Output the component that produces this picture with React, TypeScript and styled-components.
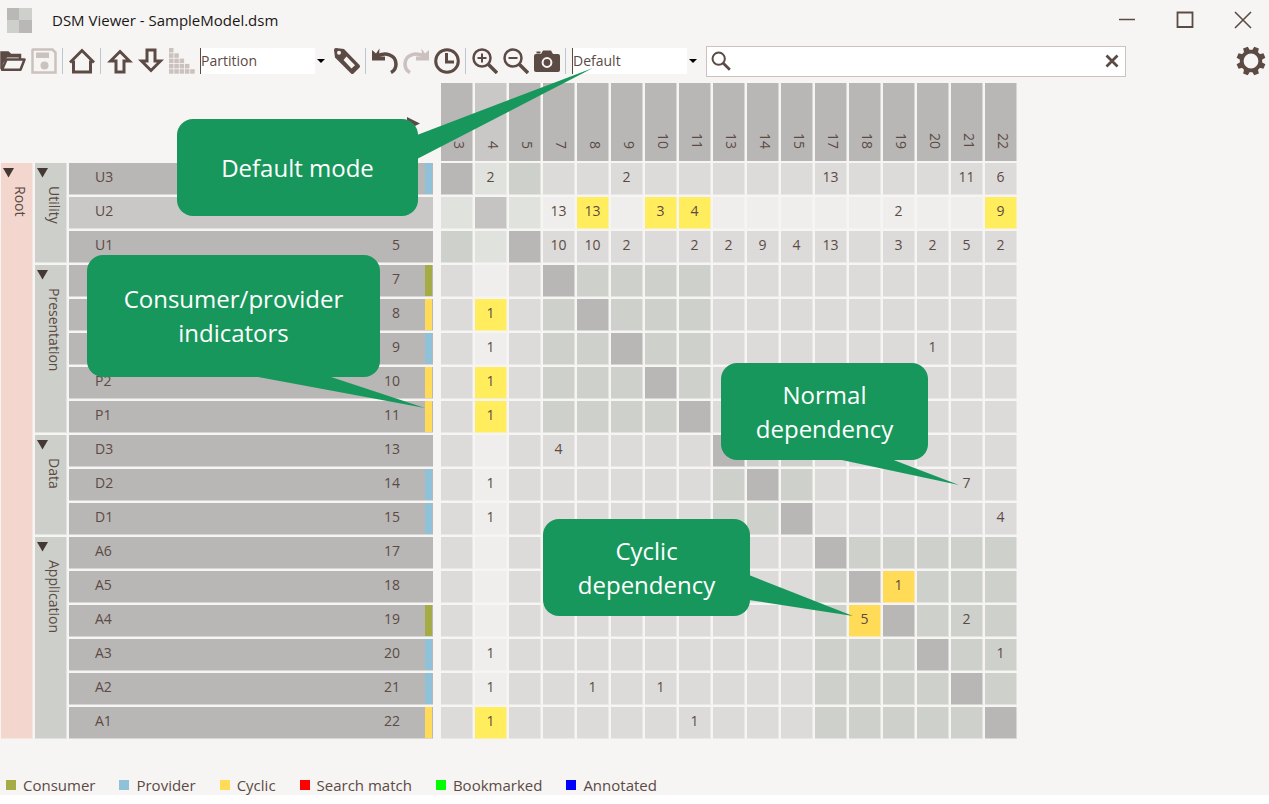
import React from "react";
import styled, { createGlobalStyle } from "styled-components";

const ink = "#5c4a45";
const page = "#f6f5f3";
const green = "#18975c";

const GlobalStyle = createGlobalStyle`
  *, *::before, *::after { box-sizing: border-box; }
  body { margin: 0; background: #fff; }
  body, button, input, select { font-family: "Open Sans", "Noto Sans", sans-serif; }
`;

const Window = styled.div`
  position: relative;
  background: ${page};
  color: ${ink};
  font-size: 14px;
  overflow: hidden;
`;

const TitleBar = styled.header`
  display: flex;
  align-items: center;
  height: 40px;
  padding: 0 5px 0 6px;
`;

const Title = styled.h1`
  margin: 0 auto 0 20px;
  font-size: 15px;
  line-height: 24px;
  font-weight: 400;
  color: #1a1716;
  white-space: nowrap;
`;

const WindowButtons = styled.div`
  display: flex;
  gap: 16px;
`;

const IconButton = styled.button<{ $size?: number }>`
  display: flex;
  align-items: center;
  justify-content: center;
  flex: none;
  width: ${(p) => p.$size ?? 26}px;
  height: ${(p) => p.$size ?? 26}px;
  padding: 0;
  border: 0;
  background: none;
  color: ${ink};
  &:disabled { color: #cbc1be; }
`;

const Toolbar = styled.div`
  display: flex;
  align-items: center;
  gap: 5px;
  height: 42px;
  padding-right: 3px;
`;

const Separator = styled.span`
  flex: none;
  width: 2px;
  height: 26px;
  border-left: 1px solid #bcc6d0;
`;

const SelectBox = styled.label`
  position: relative;
  flex: none;
  width: 129px;
  height: 26px;
  svg { position: absolute; right: 4px; top: 11px; pointer-events: none; }
`;

const Select = styled.select`
  appearance: none;
  width: 100%;
  height: 26px;
  padding: 0 0 2px;
  border: 0;
  border-left: 1px solid ${ink};
  border-radius: 0;
  background: linear-gradient(#fff, #fff) 0 0 / 114px 100% no-repeat;
  color: ${ink};
  font-size: 14px;
`;

const SearchBox = styled.label`
  display: flex;
  align-items: center;
  flex: 0 1 420px;
  height: 31px;
  padding: 0 0 0 4px;
  border: 1px solid #cdc0be;
  background: #fff;
`;

const SearchInput = styled.input`
  flex: 1;
  min-width: 0;
  border: 0;
  outline: 0;
  background: none;
  font-size: 14px;
`;

const Settings = styled.div`
  margin-left: auto;
`;

const Matrix = styled.table`
  table-layout: fixed;
  width: 1020px;
  margin: -1px 0 0 -1px;
  border-collapse: separate;
  border-spacing: 2px;
  th, td { padding: 0; font-weight: 400; line-height: 20px; }
`;

const CornerInner = styled.div`
  display: flex;
  justify-content: flex-end;
  align-items: flex-end;
  height: 78px;
  padding: 0 13px 31px 0;
`;

const ColumnHead = styled.th<{ $lit: boolean }>`
  height: 78px;
  border-right: 1px solid #f6f5f380;
  background: ${(p) => (p.$lit ? "#c9c8c7" : "#b8b7b5")};
`;

const ColumnLabel = styled.div`
  display: flex;
  justify-content: flex-end;
  align-items: center;
  height: 78px;
  padding: 0 2px 12px 8px;
  writing-mode: vertical-rl;
`;

const Branch = styled.th<{ $tone: string }>`
  vertical-align: top;
  border-right: 1px solid #f6f5f380;
  border-bottom: 1px solid #f6f5f380;
  background: ${(p) => p.$tone};
`;

const BranchInner = styled.div`
  display: flex;
  flex-direction: column;
  gap: 8px;
  padding: 5px 2px 0;
  span { writing-mode: vertical-rl; margin-left: 5px; }
`;

const ItemHead = styled.th<{ $lit: boolean }>`
  border-bottom: 1px solid #f6f5f380;
  background: ${(p) => (p.$lit ? "#c9c8c7" : "#b8b7b5")};
`;

const ItemInner = styled.div`
  display: flex;
  align-items: center;
  height: 31px;
  padding: 0 1px 0 26px;
`;

const ItemName = styled.span`
  padding-bottom: 3px;
`;

const ItemId = styled.span`
  margin: 0 25px 0 auto;
  padding-bottom: 3px;
`;

const Indicator = styled.i<{ $tone: string }>`
  width: 7px;
  height: 31px;
  background: ${(p) => p.$tone};
`;

const Cell = styled.td<{ $tone: string }>`
  height: 32px;
  border-right: 1px solid #f6f5f380;
  border-bottom: 1px solid #f6f5f380;
  text-align: center;
  background: ${(p) => p.$tone};
  && { padding-bottom: 3px; }
`;

const Legend = styled.footer`
  display: flex;
  align-items: center;
  gap: 24px;
  height: 20px;
  margin-top: 34px;
  padding-left: 6px;
  font-size: 15px;
  line-height: 20px;
`;

const LegendItem = styled.span`
  display: flex;
  align-items: center;
  gap: 7px;
  white-space: nowrap;
`;

const Swatch = styled.i<{ $tone: string }>`
  width: 10px;
  height: 10px;
  background: ${(p) => p.$tone};
`;

const Note = styled.aside<{ $x: number; $y: number; $w: number; $h: number }>`
  position: absolute;
  left: ${(p) => p.$x}px;
  top: ${(p) => p.$y}px;
  width: ${(p) => p.$w}px;
  height: ${(p) => p.$h}px;
  display: flex;
  align-items: center;
  justify-content: center;
  border-radius: 16px;
  background: ${green};
  color: #fff;
  font-size: 24px;
  line-height: 34px;
  text-align: center;
  white-space: pre-line;
  svg { position: absolute; left: 0; top: 0; overflow: visible; pointer-events: none; }
`;

const Icon = ({ children, size = 26, box = 26 }: { children: React.ReactNode; size?: number; box?: number }) => (
  <svg width={size} height={size} viewBox={`0 0 ${box} ${box}`} fill="none" stroke="currentColor" strokeWidth={3} aria-hidden="true">
    {children}
  </svg>
);

const icons = {
  open: (
    <Icon>
      <path d="M1.5 21V4.500H8L10.500 7H20V11" strokeWidth={2.500} />
      <path d="M1.500 4.500H8l2.500 3H20v2H7L1.500 18Z" fill="currentColor" stroke="none" />
      <path d="M2 21.800 6.500 11.500H24.500L20.500 21.800Z" strokeWidth={2.500} strokeLinejoin="round" />
    </Icon>
  ),
  save: (
    <Icon>
      <path d="M2 1.500H21.500L24.500 4.500V24.500H1.500V2Z" strokeWidth={2.500} />
      <path d="M5 4.500H18V10H5Z" fill="currentColor" stroke="none" />
      <circle cx="13.500" cy="17.500" r="4" fill="currentColor" stroke="none" />
    </Icon>
  ),
  home: (
    <Icon>
      <path d="M1 14.500 13 2.500 25 14.500" />
      <path d="M4.500 12.500V24H21.500V12.500" />
    </Icon>
  ),
  up: (
    <Icon>
      <path d="M13 3.500 22.500 13H17V24H9V13H3.500Z" />
    </Icon>
  ),
  down: (
    <Icon>
      <path d="M13 22.500 3.500 13H9V2H17V13H22.500Z" />
    </Icon>
  ),
  sort: (
    <Icon>
      <g fill="currentColor" stroke="none">
        {[0, 1, 2, 3, 4].map((row) =>
          Array.from({ length: row + 1 }, (_, c) => (
            <rect key={`${row}-${c}`} x={c * 5.300} y={row * 5.300} width="4.500" height="4.500" />
          ))
        )}
      </g>
    </Icon>
  ),
  tag: (
    <Icon>
      <path
        d="M0 2Q0 0 2 0L10 1 25.500 17Q26.500 18.500 25.500 19.500L19.500 25.500Q18.500 26.500 17 25.500L1 9.500ZM5 2.800A2 2 0 1 0 5 6.800A2 2 0 1 0 5 2.800M12.500 8.500 9.500 12 17.500 20.500 21 17.200Z"
        fill="currentColor"
        fillRule="evenodd"
        stroke="none"
      />
    </Icon>
  ),
  undo: (
    <Icon>
      <path d="M4 9C13 3 24 7 24 16C24 20 22 23 19 24.500" strokeWidth={3.500} />
      <path d="M0 2 4 5.500 7.500.5 7 8.500H13V12.500H0Z" fill="currentColor" stroke="none" />
    </Icon>
  ),
  redo: (
    <Icon>
      <path d="M22 9C13 3 2 7 2 16C2 20 4 23 7 24.500" strokeWidth={3.500} />
      <path d="M26 2 22 5.500 18.500.5 19 8.500H13V12.500H26Z" fill="currentColor" stroke="none" />
    </Icon>
  ),
  clock: (
    <Icon>
      <circle cx="13" cy="13" r="11.300" />
      <path d="M12.500 5V14H20" />
    </Icon>
  ),
  zoomIn: (
    <Icon>
      <circle cx="10" cy="10" r="8.500" strokeWidth={2.500} />
      <path d="M16 16 25 25" strokeWidth={3.500} />
      <path d="M5.500 10H14.500M10 5.500V14.500" strokeWidth={2} />
    </Icon>
  ),
  zoomOut: (
    <Icon>
      <circle cx="10" cy="10" r="8.500" strokeWidth={2.500} />
      <path d="M16 16 25 25" strokeWidth={3.500} />
      <path d="M5.500 10H14.500" strokeWidth={2} />
    </Icon>
  ),
  camera: (
    <Icon>
      <path
        d="M2 6H7L9 2.500H17L19 6H24Q26 6 26 8V22Q26 24 24 24H2Q0 24 0 22V8Q0 6 2 6Z"
        fill="currentColor"
        stroke="none"
      />
      <circle cx="13" cy="14.500" r="4.400" stroke={page} strokeWidth={2} />
      <path d="M2.500 4.500H6.500" strokeWidth={2} />
    </Icon>
  ),
  search: (
    <Icon size={20}>
      <circle cx="10" cy="10" r="8" strokeWidth={2.600} />
      <path d="M16 16 24.500 24.500" strokeWidth={3.600} />
    </Icon>
  ),
  gear: (
    <Icon size={30} box={30}>
      <circle cx="15" cy="15" r="9.300" strokeWidth={3.800} />
      {[0, 1, 2, 3, 4, 5, 6, 7].map((n) => (
        <path key={n} d="M11.800 5.500 12.500.5H17.500L18.200 5.500Z" fill="currentColor" stroke="none" transform={`rotate(${n * 45 + 22.500} 15 15)`} />
      ))}
    </Icon>
  ),
};

const DropArrow = () => (
  <svg width="8" height="4" viewBox="0 0 8 4" aria-hidden="true">
    <path d="M0 0H8L4 4Z" fill="#000" />
  </svg>
);

const tones: Record<string, string> = { consumer: "#a5ab45", provider: "#8fc1d8", cyclic: "#ffdb57" };

type Item = { name: string; id: number; mark?: string; deps: Record<number, number>; cyclic?: number[] };

const groups: { name: string; items: Item[] }[] = [
  {
    name: "Utility",
    items: [
      { name: "U3", id: 3, mark: "provider", deps: { 4: 2, 9: 2, 17: 13, 21: 11, 22: 6 } },
      { name: "U2", id: 4, deps: { 7: 13, 8: 13, 10: 3, 11: 4, 19: 2, 22: 9 }, cyclic: [8, 10, 11, 22] },
      { name: "U1", id: 5, deps: { 7: 10, 8: 10, 9: 2, 11: 2, 13: 2, 14: 9, 15: 4, 17: 13, 19: 3, 20: 2, 21: 5, 22: 2 } },
    ],
  },
  {
    name: "Presentation",
    items: [
      { name: "P5", id: 7, mark: "consumer", deps: {} },
      { name: "P4", id: 8, mark: "cyclic", deps: { 4: 1 }, cyclic: [4] },
      { name: "P3", id: 9, mark: "provider", deps: { 4: 1, 20: 1 } },
      { name: "P2", id: 10, mark: "cyclic", deps: { 4: 1 }, cyclic: [4] },
      { name: "P1", id: 11, mark: "cyclic", deps: { 4: 1 }, cyclic: [4] },
    ],
  },
  {
    name: "Data",
    items: [
      { name: "D3", id: 13, deps: { 7: 4 } },
      { name: "D2", id: 14, mark: "provider", deps: { 4: 1, 21: 7 } },
      { name: "D1", id: 15, mark: "provider", deps: { 4: 1, 22: 4 } },
    ],
  },
  {
    name: "Application",
    items: [
      { name: "A6", id: 17, deps: {} },
      { name: "A5", id: 18, deps: { 19: 1 }, cyclic: [19] },
      { name: "A4", id: 19, mark: "consumer", deps: { 18: 5, 21: 2 }, cyclic: [18] },
      { name: "A3", id: 20, mark: "provider", deps: { 4: 1, 22: 1 } },
      { name: "A2", id: 21, mark: "provider", deps: { 4: 1, 8: 1, 10: 1 } },
      { name: "A1", id: 22, mark: "cyclic", deps: { 4: 1, 11: 1 }, cyclic: [4] },
    ],
  },
];

const selected = 4;
const columns = groups.flatMap((g) => g.items.map((i) => ({ id: i.id, group: g.name })));

function cellTone(row: Item, group: string, col: { id: number; group: string }) {
  const lit = row.id === selected || col.id === selected;
  if (row.cyclic?.includes(col.id)) return lit ? "#ffed5e" : "#ffdb57";
  if (row.id === col.id) return lit ? "#c5c4c2" : "#b8b7b5";
  if (group === col.group) return lit ? "#dfe2dd" : "#ced1cb";
  return lit ? "#efeeec" : "#dcdbd9";
}

const Triangle = () => (
  <svg width="11" height="10" viewBox="0 0 11 10" aria-hidden="true">
    <path d="M0 0H11L5.500 9.500Z" fill="#453833" />
  </svg>
);

const legend: [string, string][] = [
  ["Consumer", tones.consumer],
  ["Provider", tones.provider],
  ["Cyclic", tones.cyclic],
  ["Search match", "#ff0000"],
  ["Bookmarked", "#00ff00"],
  ["Annotated", "#0000ff"],
];

const notes = [
  { text: "Default mode", x: 177, y: 119, w: 241, h: 97, tail: "240,16 416,-51 240,40" },
  { text: "Consumer/provider\nindicators", x: 87, y: 255, w: 293, h: 122, tail: "165,121 241,121 338,153" },
  { text: "Normal\ndependency", x: 721, y: 363, w: 207, h: 97, tail: "116,96 170,96 238,122" },
  { text: "Cyclic\ndependency", x: 543, y: 519, w: 207, h: 97, tail: "206,56 206,81 310,97" },
];

const ToolButton = ({ label, icon, disabled }: { label: string; icon: React.ReactNode; disabled?: boolean }) => (
  <IconButton type="button" aria-label={label} disabled={disabled}>
    {icon}
  </IconButton>
);

export default function App() {
  return (
    <Window>
      <GlobalStyle />
      <TitleBar>
        <svg width="26" height="26" viewBox="0 0 26 26" aria-hidden="true">
          <path d="M1 1H13V13H1ZM13 13H26V26H13Z" fill="#b9b8b6" />
          <path d="M13 1H26V13H13ZM1 13H13V26H1Z" fill="#ced1cb" />
        </svg>
        <Title>DSM Viewer - SampleModel.dsm</Title>
        <WindowButtons>
          <IconButton type="button" aria-label="Minimize" $size={42}>
            <Icon size={18} box={18}><path d="M1 8.500H17" strokeWidth={1.500} /></Icon>
          </IconButton>
          <IconButton type="button" aria-label="Maximize" $size={42}>
            <Icon size={18} box={18}><path d="M1.500 1.500H16.500V16H1.500Z" strokeWidth={1.800} /></Icon>
          </IconButton>
          <IconButton type="button" aria-label="Close" $size={42}>
            <Icon size={18} box={18}><path d="M1 1 17 17M17 1 1 17" strokeWidth={1.600} /></Icon>
          </IconButton>
        </WindowButtons>
      </TitleBar>

      <Toolbar>
        <ToolButton label="Open" icon={icons.open} />
        <ToolButton label="Save" icon={icons.save} disabled />
        <Separator />
        <ToolButton label="Home" icon={icons.home} />
        <Separator />
        <ToolButton label="Move up" icon={icons.up} />
        <ToolButton label="Move down" icon={icons.down} />
        <ToolButton label="Sort" icon={icons.sort} disabled />
        <SelectBox>
          <Select aria-label="Sort algorithm" defaultValue="Partition"><option>Partition</option></Select>
          <DropArrow />
        </SelectBox>
        <ToolButton label="Bookmark" icon={icons.tag} />
        <Separator />
        <ToolButton label="Undo" icon={icons.undo} />
        <ToolButton label="Redo" icon={icons.redo} disabled />
        <ToolButton label="History" icon={icons.clock} />
        <Separator />
        <ToolButton label="Zoom in" icon={icons.zoomIn} />
        <ToolButton label="Zoom out" icon={icons.zoomOut} />
        <ToolButton label="Snapshot" icon={icons.camera} />
        <Separator />
        <SelectBox>
          <Select aria-label="Indicator mode" defaultValue="Default"><option>Default</option></Select>
          <DropArrow />
        </SelectBox>
        <SearchBox>
          {icons.search}
          <SearchInput type="text" aria-label="Search" />
          <IconButton type="button" aria-label="Clear search">
            <Icon size={14} box={14}><path d="M1.500 1.500 12.500 12.500M12.500 1.500 1.500 12.500" strokeWidth={2.800} /></Icon>
          </IconButton>
        </SearchBox>
        <Settings>
          <IconButton type="button" aria-label="Settings" $size={30}>{icons.gear}</IconButton>
        </Settings>
      </Toolbar>

      <Matrix>
        <colgroup>
          <col width="32" />
          <col width="32" />
          <col width="364" />
          <col width="4" />
          {columns.map((c) => <col key={c.id} width="32" />)}
        </colgroup>
        <thead>
          <tr>
            <td colSpan={3}>
              <CornerInner>
                <svg width="13" height="13" viewBox="0 0 13 13" aria-hidden="true">
                  <path d="M0 0 13 6.500 0 13Z" fill={ink} />
                </svg>
              </CornerInner>
            </td>
            <td />
            {columns.map((c) => (
              <ColumnHead key={c.id} $lit={c.id === selected} scope="col">
                <ColumnLabel>{c.id}</ColumnLabel>
              </ColumnHead>
            ))}
          </tr>
        </thead>
        <tbody>
          {groups.map((g, gi) =>
            g.items.map((item, i) => (
              <tr key={item.id}>
                {gi === 0 && i === 0 && (
                  <Branch $tone="#f3d7ce" rowSpan={columns.length} scope="rowgroup">
                    <BranchInner><Triangle /><span>Root</span></BranchInner>
                  </Branch>
                )}
                {i === 0 && (
                  <Branch $tone="#cdd0ca" rowSpan={g.items.length} scope="rowgroup">
                    <BranchInner><Triangle /><span>{g.name}</span></BranchInner>
                  </Branch>
                )}
                <ItemHead $lit={item.id === selected} scope="row">
                  <ItemInner>
                    <ItemName>{item.name}</ItemName>
                    <ItemId>{item.id}</ItemId>
                    <Indicator $tone={item.mark ? tones[item.mark] : "transparent"} />
                  </ItemInner>
                </ItemHead>
                <td />
                {columns.map((c) => (
                  <Cell key={c.id} $tone={cellTone(item, g.name, c)}>{item.deps[c.id]}</Cell>
                ))}
              </tr>
            ))
          )}
        </tbody>
      </Matrix>

      <Legend>
        {legend.map(([label, tone]) => (
          <LegendItem key={label}><Swatch $tone={tone} />{label}</LegendItem>
        ))}
      </Legend>

      {notes.map((n) => (
        <Note key={n.text} $x={n.x} $y={n.y} $w={n.w} $h={n.h}>
          <svg width={n.w} height={n.h} aria-hidden="true"><polygon points={n.tail} fill={green} /></svg>
          {n.text}
        </Note>
      ))}
    </Window>
  );
}
